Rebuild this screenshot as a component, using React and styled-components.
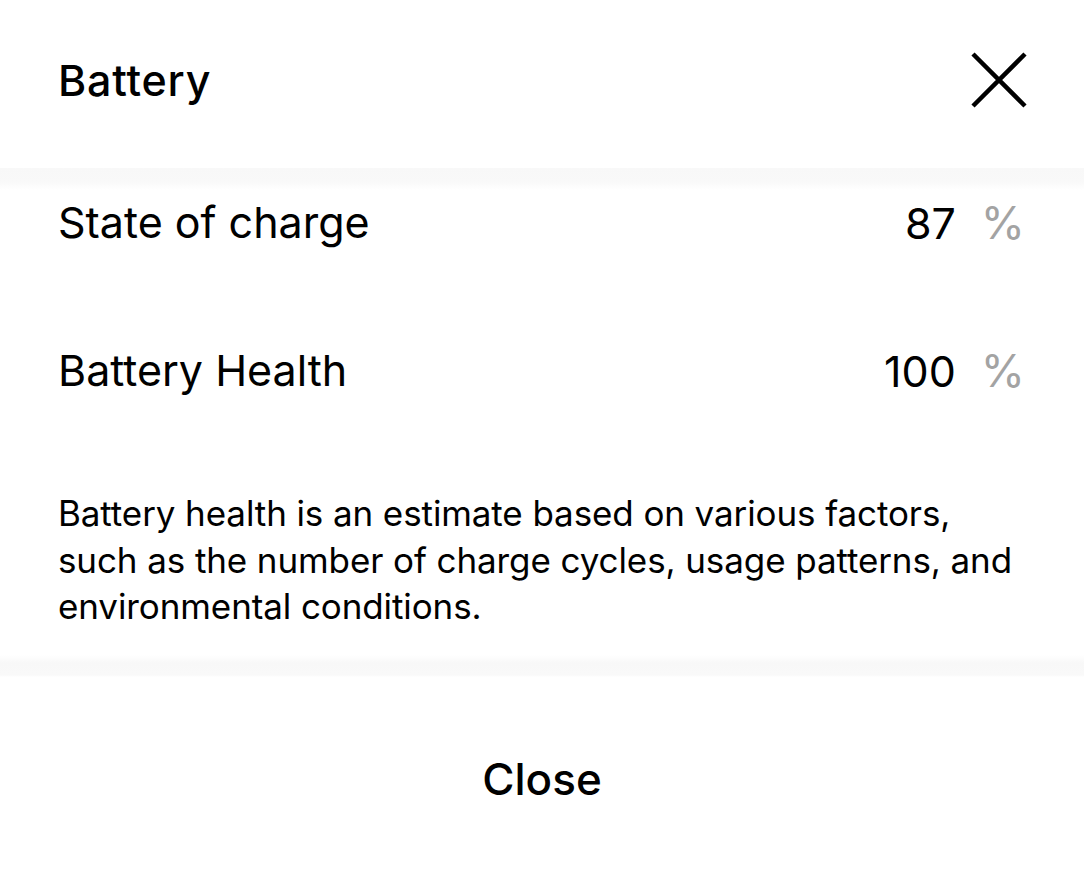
import React from 'react'
import styled, { createGlobalStyle } from 'styled-components'

const GlobalStyle = createGlobalStyle`
  html, body {
    margin: 0;
    padding: 0;
    background: #ffffff;
  }
  body {
    font-family: Inter, 'Liberation Sans', Arial, sans-serif;
    color: #000;
  }
`

const Sheet = styled.div`
  width: 1084px;
  height: 875px;
  display: flex;
  flex-direction: column;
  background: #fff;
`

const Header = styled.header`
  height: 168px;
  flex-shrink: 0;
  display: flex;
  align-items: center;
  justify-content: space-between;
  padding: 0 58px 8px 58px;
  box-sizing: border-box;
`

const Title = styled.h1`
  margin: 0;
  font-size: 43px;
  font-weight: 500;
  letter-spacing: 0.8px;
`

const CloseIcon = styled.button`
  border: 0;
  background: none;
  padding: 0;
  width: 56px;
  height: 56px;
  margin-right: -1px;
  display: flex;
  align-items: center;
  justify-content: center;
  cursor: pointer;
`

const Body = styled.main`
  flex: 1;
  display: flex;
  flex-direction: column;
  padding: 0 58px;
  background: linear-gradient(#f8f8f8 0, #f9f9f9 14px, #fff 22px);
`

const Row = styled.div`
  height: 148px;
  display: flex;
  align-items: center;
  justify-content: space-between;
  margin-top: ${p => p.$first ? '-20px' : '0'};
`

const Label = styled.span`
  font-size: 43px;
`

const Value = styled.span`
  display: flex;
  align-items: baseline;
  gap: 25px;
  font-size: 43px;
`

const Unit = styled.span`
  color: #a3a3a3;
  font-size: 45px;
  margin-right: 1px;
`

const Note = styled.p`
  margin: 46px 0 0 0;
  font-size: 35px;
  line-height: 46.5px;
  letter-spacing: -0.1px;
  max-width: 968px;
`

const Footer = styled.footer`
  height: 220px;
  flex-shrink: 0;
  display: flex;
  align-items: center;
  justify-content: center;
  padding-top: 28px;
  box-sizing: border-box;
  background: linear-gradient(#fff 0, #f8f8f8 8px, #f9f9f9 20px, #fff 22px);
`

const CloseButton = styled.button`
  border: 0;
  background: none;
  font-family: Inter, 'Liberation Sans', Arial, sans-serif;
  font-size: 44px;
  font-weight: 500;
  color: #000;
  cursor: pointer;
`

const rows = [
  { label: 'State of charge', value: 87 },
  { label: 'Battery Health', value: 100 },
]

export default function App() {
  return (
    <>
      <GlobalStyle />
      <Sheet>
        <Header>
          <Title>Battery</Title>
          <CloseIcon aria-label="close">
            <svg width="56" height="56" viewBox="0 0 56 56">
              <path d="M2 2 L54 54 M54 2 L2 54" stroke="#000" strokeWidth="4.5" fill="none" />
            </svg>
          </CloseIcon>
        </Header>
        <Body>
          {rows.map((r, i) => (
            <Row key={r.label} $first={i === 0}>
              <Label>{r.label}</Label>
              <Value>
                {r.value}
                <Unit>%</Unit>
              </Value>
            </Row>
          ))}
          <Note>
            Battery health is an estimate based on various factors, such as the number of charge cycles, usage patterns, and environmental conditions.
          </Note>
        </Body>
        <Footer>
          <CloseButton>Close</CloseButton>
        </Footer>
      </Sheet>
    </>
  )
}
